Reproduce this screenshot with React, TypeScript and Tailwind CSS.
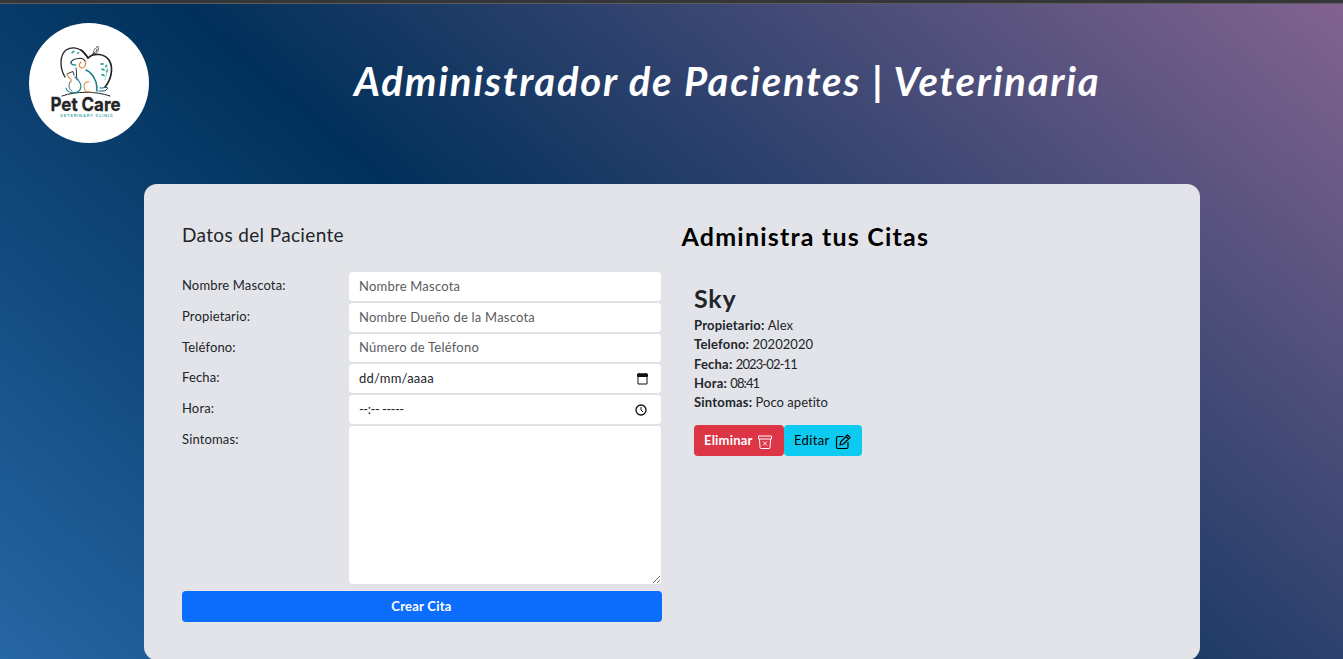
import React from "react";

const label = "text-[13px] leading-[19px] tracking-[0.15px] text-[#212529]";
const field = "box-border w-[314px] rounded-[4px] border border-[#dee2e6] bg-white px-[10.5px] text-[13px] tracking-[0.22px]";

function Logo() {
  return (
    <svg width="120" height="120" viewBox="0 0 120 120" className="block">
      <circle cx="60" cy="60" r="60" fill="#fff" />
      <g fill="none" stroke="#20252a" strokeLinecap="round" strokeLinejoin="round">
        <path d="M36 54C31 46 30 33 37 27C45 22 54 26 59 35" strokeWidth="1.3" />
        <path d="M52 27C55 29 57 32 59 35C65 29 76 31 80 37C85 45 82 57 76 64" strokeWidth="1.7" />
        <path d="M61 34L66 29M64 31C64 28 66 25 69 23C70 27 69 30 65 31M67 29L68 26" strokeWidth="0.7" />
        <path d="M42 40C42 37 45 36 49 35.500C52 35 55 36 56 38" strokeWidth="1.1" />
        <path d="M47 45C48 49 47 53 48 57M38 51L40 50L44 48.500L45 52" strokeWidth="0.9" />
        <path d="M33 73C47 68 67 68 81 73" strokeWidth="1" />
      </g>
      <g fill="none" strokeWidth="1.2" strokeLinecap="round">
        <path d="M42 39C42 42 44 42 47 42" stroke="#177c91" />
        <path d="M52 39C49 42 50 45 54 45C57 44 57 40 56 38" stroke="#df8a48" />
        <path d="M57 47C62 49 65 54 67 59C68 63 68 66 68 68" stroke="#177c82" strokeWidth="1.5" />
        <path d="M38 51C39 54 39 55 42 56L42 59" stroke="#d98c57" />
        <path d="M46 54C51 57 54 64 50 68C46 71 38 70 37 65" stroke="#178995" />
        <path d="M41 59C39 63 40 66 43 68" stroke="#315464" strokeWidth="0.9" />
        <path d="M60 59C55 58 54 63 56 67C57 69 60 69 62 69" stroke="#e79151" />
        <path d="M70 68L76 68L79 65C76 63 74 66 71 65" stroke="#175c79" strokeWidth="1" />
      </g>
      <g fill="#36a798">
        <ellipse cx="44" cy="29" rx="2" ry="1" transform="rotate(-35 44 29)" />
        <ellipse cx="49" cy="30" rx="1.7" ry="0.8" transform="rotate(-40 49 30)" />
        <ellipse cx="73" cy="41" rx="2" ry="1" />
        <ellipse cx="77" cy="43" rx="1.6" ry="0.8" transform="rotate(-50 77 43)" />
        <ellipse cx="74" cy="46.500" rx="2" ry="1" transform="rotate(20 74 46.500)" />
        <ellipse cx="78" cy="48" rx="1.6" ry="0.8" transform="rotate(-50 78 48)" />
        <ellipse cx="74" cy="52" rx="2" ry="1" transform="rotate(20 74 52)" />
      </g>
      <path d="M78 42Q79 49 76 57" fill="none" stroke="#36a798" strokeWidth="0.5" />
      <text x="21.5" y="88" textLength="70" lengthAdjust="spacingAndGlyphs" fontFamily="Inter, sans-serif" fontWeight="700" fontSize="18.500" fill="#252326" stroke="#252326" strokeWidth="0.3">Pet Care</text>
      <text x="31" y="94" textLength="53" fontFamily="Inter, sans-serif" fontWeight="600" fontSize="4" fill="#35a69b">VETERINARY CLINIC</text>
    </svg>
  );
}

function TextRow({ name, placeholder, children }: { name: string; placeholder?: string; children?: React.ReactNode }) {
  return (
    <div className="flex h-[30.8px] items-start">
      <label className={`${label} w-[166px] pl-[0.5px] pt-[5px]`}>{name}</label>
      {children ?? <input placeholder={placeholder} className={`${field} h-[30.8px] pb-[1px] placeholder:text-[#595c5f] placeholder:opacity-100`} />}
    </div>
  );
}

function Detail({ name, value, tight = false }: { name: string; value: string; tight?: boolean }) {
  return (
    <p className="h-[19.3px] whitespace-nowrap text-[13px] leading-[19.3px] text-[#212529]">
      <strong className="font-bold tracking-[0.2px]">{name}</strong>{" "}
      <span className={tight ? "tracking-[-0.9px]" : "tracking-[0.03px]"}>{value}</span>
    </p>
  );
}

export default function App() {
  return (
    <div className="h-[659px] overflow-hidden bg-[linear-gradient(41deg,#2666a4_0%,#00305a_44.6%,#836390_100%)] font-['Lato',sans-serif]">
      <div className="h-[4px] border-b border-[#5d5d60] bg-[#353638]" />
      <header className="flex h-[180px] items-start pl-[29px] pt-[19px]">
        <Logo />
        <h1 className="ml-[205px] mt-[35px] whitespace-nowrap text-[40px] font-bold italic leading-[46px] tracking-[1.78px] text-white">
          Administrador de Pacientes | Veterinaria
        </h1>
      </header>
      <main className="mx-auto flex h-[476px] w-[1056px] rounded-[13px] bg-[#e3e4e9] pl-[38px]">
        <form className="w-[480px]">
          <h2 className="mt-[37px] h-[50px] pl-[0.5px] text-[19px] leading-[27px] tracking-[0.35px] text-[#212529]">Datos del Paciente</h2>
          <TextRow name="Nombre Mascota:" placeholder="Nombre Mascota" />
          <TextRow name="Propietario:" placeholder="Nombre Dueño de la Mascota" />
          <TextRow name="Teléfono:" placeholder="Número de Teléfono" />
          <TextRow name="Fecha:">
            <div className={`${field} flex h-[30.8px] items-center justify-between text-[#212529]`}>
              <span>dd/mm/aaaa</span>
              <svg width="13" height="13" viewBox="0 0 13 13" className="mr-[1px]"><path d="M2 2H11V12H2ZM1.5 2H11.5V4.5H1.5ZM3.5 1V3M9.5 1V3" fill="none" stroke="#111" /><path d="M2 2H11V5H2Z" fill="#111" /></svg>
            </div>
          </TextRow>
          <TextRow name="Hora:">
            <div className={`${field} flex h-[30.8px] items-center justify-between text-[#212529]`}>
              <span className="tracking-[-0.5px]">--:-- -----</span>
              <svg width="12" height="12" viewBox="0 0 12 12" className="mr-[3px]" fill="none" stroke="#111" strokeWidth="1.3"><circle cx="6" cy="6" r="5" /><path d="M6 3V6L8 8" strokeWidth="1" /></svg>
            </div>
          </TextRow>
          <div className="flex items-start">
            <label className={`${label} w-[166px] pl-[0.5px] pt-[5px]`}>Sintomas:</label>
            <textarea className={`${field} h-[160px] resize`} />
          </div>
          <button type="button" className="mt-[6px] block h-[31px] w-[480px] rounded-[4px] bg-[#0d6efd] text-[13px] font-bold tracking-[0.25px] text-white">Crear Cita</button>
        </form>
        <section className="ml-[20px]">
          <h2 className="mt-[37px] whitespace-nowrap text-[25px] font-bold leading-[30px] tracking-[1.2px] text-black">Administra tus Citas</h2>
          <div className="ml-[12px] mt-[32px]">
            <h3 className="h-[33px] pl-[0.5px] text-[25px] font-bold leading-[30px] tracking-[0.8px] text-[#212529]">Sky</h3>
            <div className="pl-[0.5px]">
              <Detail name="Propietario:" value="Alex" />
              <Detail name="Telefono:" value="20202020" />
              <Detail name="Fecha:" value="2023-02-11" tight />
              <Detail name="Hora:" value="08:41" tight />
              <Detail name="Sintomas:" value="Poco apetito" />
            </div>
            <div className="mt-[13px] flex">
              <button className="flex h-[31px] w-[90px] items-center rounded-[4px] bg-[#dc3545] pl-[10.5px] text-[13px] font-bold tracking-[0.2px] text-white">
                <span className="w-[52.5px] whitespace-nowrap text-left">Eliminar</span>
                <svg width="16" height="16" viewBox="0 0 16 16" fill="none" stroke="currentColor" strokeLinejoin="round" className="mt-[2px]"><path d="M1.500 2H14.500V5H1.500ZM2.500 5L3 13.500Q3 14.500 4 14.500H12Q13 14.500 13 13.500L13.500 5M6 7.500L10 11.500M10 7.500L6 11.500" /></svg>
              </button>
              <button className="flex h-[31px] w-[78px] items-center rounded-[4px] bg-[#0dcaf0] pl-[10.5px] text-[13px] tracking-[0.35px] text-black">
                <span className="w-[40.5px] whitespace-nowrap text-left">Editar</span>
                <svg width="16" height="16" viewBox="0 0 16 16" fill="none" stroke="currentColor" strokeWidth="1.2" strokeLinejoin="round" className="mt-[2px]"><path d="M8.500 2.500H3Q1.500 2.500 1.500 4V13Q1.500 14.500 3 14.500H11.500Q13 14.500 13 13V8M5 11L6 7.500L12.500 1L15 3.500L8.500 10ZM11 2.500L13.500 5" /></svg>
              </button>
            </div>
          </div>
        </section>
      </main>
    </div>
  );
}
